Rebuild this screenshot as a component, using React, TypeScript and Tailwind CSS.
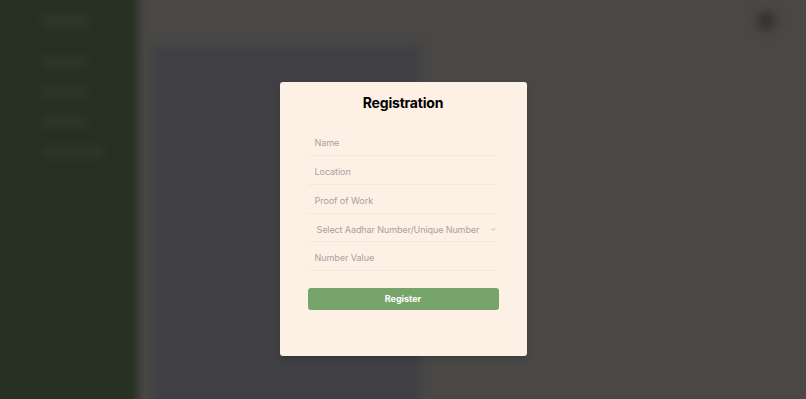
import React from 'react';

const navItems = ['Dashboard', 'Workers', 'Projects', 'Registrations'];

const fields = ['Name', 'Location', 'Proof of Work'];

const App: React.FC = () => {
  return (
    <div className="relative w-full h-[399px] overflow-hidden bg-[#4a4846] font-['Inter',_'Noto_Sans',_sans-serif]">
      {/* dimmed, blurred page behind the dialog */}
      <div className="flex h-[419px] -mx-[10px] -mt-[10px] blur-[5px]">
        <aside className="w-[148px] shrink-0 bg-[#263022] flex flex-col pl-[52px] pt-[25px]">
          <div className="h-[11px] w-[48px] rounded bg-[#2f3a2c] mb-[31px]" />
          <div className="flex flex-col gap-[20px]">
            {navItems.map((n, i) => (
              <div key={n} className={`h-[10px] rounded bg-[#2d382a] ${i === 3 ? 'w-[62px]' : 'w-[46px]'}`} />
            ))}
          </div>
        </aside>
        <main className="flex-1 flex flex-col">
          <header className="h-[55px] shrink-0 flex items-center justify-end pr-[40px] pt-[6px]">
            <div className="w-[20px] h-[20px] rounded-full bg-[#353433]" />
          </header>
          <div className="flex-1 pl-[13px]">
            <div className="w-[270px] h-full bg-[#404044]" />
          </div>
        </main>
      </div>

      {/* dialog */}
      <div className="absolute inset-0 flex justify-center items-start pt-[82px]">
        <div className="w-[247px] h-[274px] bg-[#fdf0e5] rounded-[3px] shadow-md pt-[11px] px-[28px]">
          <h2 className="text-center text-[14px] font-bold text-black leading-[20px] tracking-[-0.2px]">Registration</h2>
          <form className="mt-[14px] flex flex-col">
            {fields.map((f) => (
              <input
                key={f}
                placeholder={f}
                className="h-[29px] px-[7px] pt-[2px] bg-transparent border-b border-[#f6e8dc] text-[9px] tracking-[-0.05px] text-[#57534e] placeholder:text-[#a8a29e] outline-none"
              />
            ))}
            <div className="h-[28px] flex items-center justify-between pl-[9px] pr-[2px] pt-[4px] border-b border-[#f6e8dc] text-[9px] tracking-[-0.1px] text-[#a8a29e] whitespace-nowrap">
              <span>Select Aadhar Number/Unique Number</span>
              <svg width="7" height="7" viewBox="0 0 24 24" fill="none" stroke="#a8a29e" strokeWidth="2.5" strokeLinecap="round" strokeLinejoin="round">
                <path d="M6 9l6 6 6-6" />
              </svg>
            </div>
            <input
              placeholder="Number Value"
              className="h-[29px] px-[7px] pt-[2px] bg-transparent border-b border-[#f6e8dc] text-[9px] tracking-[-0.05px] text-[#57534e] placeholder:text-[#a8a29e] outline-none"
            />
            <button type="button" className="mt-[17px] h-[22px] rounded-[3px] bg-[#76a46b] text-white text-[9px] font-bold">
              Register
            </button>
          </form>
        </div>
      </div>
    </div>
  );
};

export default App;
